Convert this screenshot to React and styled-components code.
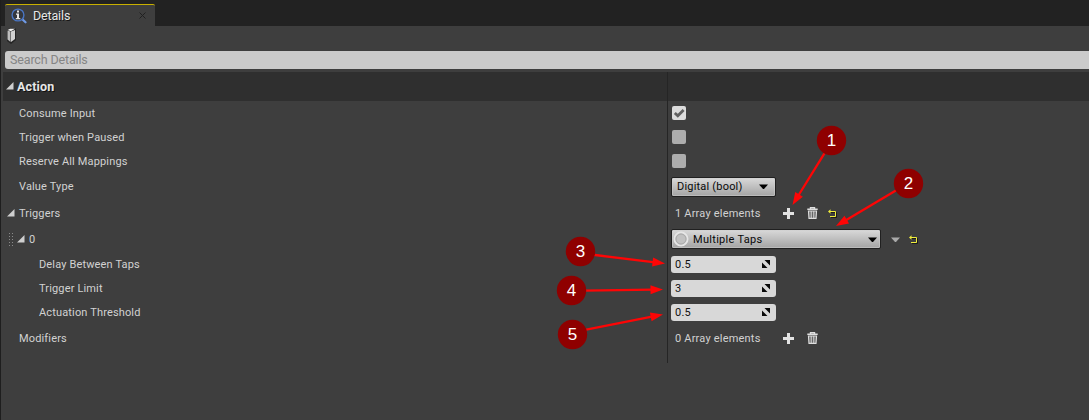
import React from "react";
import styled, { createGlobalStyle } from "styled-components";

const Global = createGlobalStyle`
  * { box-sizing: border-box; }
  body { margin: 0; background: #3e3e3e; overflow: hidden; }
`;

const Window = styled.div`
  position: relative;
  width: 1089px;
  height: 420px;
  overflow: hidden;
  background: #3e3e3e;
  border-left: 1px solid #1e1e1e;
  font-family: Roboto, "Liberation Sans", sans-serif;
  font-size: 11px;
  color: #d2d2d2;
`;

const TabBar = styled.div`
  height: 26px;
  padding: 4px 0 0 4px;
  background: #222;
`;

const Tab = styled.div`
  display: flex;
  align-items: center;
  width: 150px;
  height: 22px;
  padding: 0 9px 0 6px;
  background: #3e3e3e;
  border-top: 1px solid #c9b000;
  border-radius: 2px 2px 0 0;
`;

const TabTitle = styled.span`
  flex: 1;
  margin-left: 6px;
  font-size: 12.5px;
  color: #e6e6e6;
  letter-spacing: -0.15px;
  text-shadow: 1px 1px 0 #161616;
`;

const Toolbar = styled.div`
  height: 25px;
  padding: 2px 0 0 5px;
`;

const Search = styled.div`
  height: 18px;
  margin-left: 4px;
  padding-left: 5px;
  border-radius: 3px 0 0 3px;
  background: #cbcbcb;
  color: #858585;
  font-size: 12.5px;
  line-height: 18px;
  letter-spacing: -0.15px;
`;

const Body = styled.div`
  margin: 3px 0 0 2px;
`;

const Row = styled.div`
  display: flex;
  height: ${(p) => p.$h}px;
  background: ${(p) => (p.$header ? "#2f2f2f" : "transparent")};
`;

const Name = styled.div`
  display: flex;
  align-items: center;
  width: 665px;
  padding-left: ${(p) => p.$indent}px;
  border-right: 1px solid #252525;
  letter-spacing: 0.15px;
`;

const Category = styled.span`
  font-size: 12.5px;
  font-weight: 700;
  color: #e6e6e6;
  text-shadow: 1px 1px 0 #111;
`;

const Value = styled.div`
  display: flex;
  align-items: center;
  padding-left: ${(p) => p.$pad ?? 4}px;
  letter-spacing: 0.2px;
`;

const Check = styled.div`
  display: flex;
  width: 14px;
  height: 14px;
  border-radius: 2px;
  background: ${(p) => (p.$on ? "#dcdcdc" : "#adadad")};
`;

const Combo = styled.div`
  display: flex;
  align-items: center;
  justify-content: space-between;
  width: ${(p) => p.$w}px;
  height: 20px;
  padding: 0 ${(p) => p.$right}px 0 ${(p) => p.$pad}px;
  border: 1px solid #202020;
  border-radius: 2px;
  background: linear-gradient(#d9d9d9, #a4a4a4);
  box-shadow: inset 0 0 0 1px #cfcfcf88;
  color: #080808;
`;

const ComboLabel = styled.span`
  display: flex;
  align-items: center;
  gap: 4px;
  letter-spacing: 0.3px;
`;

const NumberBox = styled.div`
  display: flex;
  align-items: center;
  justify-content: space-between;
  width: 105px;
  height: 17px;
  padding: 0 6px 0 4px;
  border-radius: 3px;
  background: #d8d8d8;
  color: #101010;
`;

const Count = styled.span`
  width: 108px;
`;

const Actions = styled.div`
  display: flex;
  align-items: center;
  gap: ${(p) => p.$gap ?? 12}px;
  margin-left: ${(p) => p.$ml ?? 0}px;
`;

const Icon = styled.svg`
  display: block;
  flex: none;
`;

const Twisty = styled(Icon)`
  margin-right: ${(p) => p.$mr}px;
`;

const Grip = styled(Icon)`
  margin-right: 4px;
`;

const Overlay = styled.svg`
  position: absolute;
  left: -1px;
  top: 0;
  font-family: "Liberation Sans", sans-serif;
`;

const Expander = ({ gap = 4 }) => (
  <Twisty $mr={gap} width="8" height="9" viewBox="0 0 8 9">
    <path d="M7.5 0V7.5H0Z" fill="#cfcfcf" />
  </Twisty>
);

const Caret = ({ fill = "#000" }) => (
  <Icon width="9" height="5" viewBox="0 0 9 5">
    <path d="M0 0.5H9L5 5H4Z" fill={fill} />
  </Icon>
);

const DetailsIcon = () => (
  <Icon width="16" height="16" viewBox="0 0 16 16">
    <path d="M10.5 10.5L14.5 14.3" stroke="#6f9ae6" strokeWidth="2.2" strokeLinecap="round" />
    <circle cx="7" cy="7" r="5.9" fill="#34373d" stroke="#4a76c4" strokeWidth="1.4" />
    <path d="M6 2.5H8V4.5H6ZM5 5.5H8V10H9.3V11.3H4.8V10H6V6.8H5Z" fill="#e5e5e5" />
  </Icon>
);

const BlockIcon = () => (
  <Icon width="12" height="16" viewBox="0 0 12 16">
    <path d="M1 2L3 0.5H10V12L5 16L1 13Z" fill="#242424" />
    <path d="M1.5 2.5L4.5 3.5V14L1.5 11.5Z" fill="#bdbdbd" />
    <path d="M5 3.5L9 2V11L5 14Z" fill="#d2d2d2" />
    <path d="M1.5 2L4 0.8H9L5 3.2Z" fill="#f1f1f1" />
  </Icon>
);

const Plus = () => (
  <Icon width="11" height="11" viewBox="0 0 11 11">
    <path d="M5.5 0V11M0 5.5H11" stroke="#e2e2e2" strokeWidth="3" />
  </Icon>
);

const Trash = () => (
  <Icon width="11" height="12" viewBox="0 0 11 12">
    <path d="M3.5 1.5V0.6H7.5V1.5M0.3 2.2H10.7" fill="none" stroke="#dedede" strokeWidth="1.4" />
    <path d="M1.5 4H9.5L9 11.3H2Z" fill="#666" stroke="#dedede" strokeWidth="1.2" />
    <path d="M4.2 4V11M6.8 4V11" stroke="#dedede" />
  </Icon>
);

const Reset = () => (
  <Icon width="9" height="9" viewBox="0 0 9 9">
    <path d="M2 3.5H8.5V8.5H3" fill="none" stroke="#1b1b1b" />
    <path d="M1 2.5H7.5V7.5H2" fill="none" stroke="#f0ee3c" />
    <path d="M0 2.5L2.5 0.3V4.7Z" fill="#f0ee3c" />
  </Icon>
);

const Spin = () => (
  <Icon width="8" height="8" viewBox="0 0 8 8">
    <path d="M2.5 0H8V5.5ZM0 2.5L5.5 8H0Z" fill="#080808" />
  </Icon>
);

const Ring = () => (
  <Icon width="16" height="16" viewBox="0 0 16 16">
    <circle cx="8" cy="8" r="6.6" fill="#c2c2c2" stroke="#e6e6e6" strokeWidth="1.8" />
    <circle cx="8" cy="8" r="5" fill="none" stroke="#a2a2a2" strokeWidth="0.8" />
  </Icon>
);

const Marker = ({ n, x, y, from, to }) => {
  const dx = to[0] - from[0];
  const dy = to[1] - from[1];
  const len = Math.hypot(dx, dy);
  const angle = (Math.atan2(dy, dx) * 180) / Math.PI;
  return (
    <g>
      <g transform={`translate(${from[0]} ${from[1]}) rotate(${angle})`} fill="#fe0505">
        <rect x="-2" y="-1.15" width={len - 8} height="2.3" />
        <path d={`M${len} 0L${len - 12.5} -4.5V4.5Z`} />
      </g>
      <circle cx={x} cy={y} r="14.7" fill="#8f0000" />
      <text x={x} y={y + 5.5} textAnchor="middle" fontSize="17" fill="#fff">{n}</text>
    </g>
  );
};

const markers = [
  { n: 1, x: 831.5, y: 140.5, from: [824, 154], to: [792.5, 205] },
  { n: 2, x: 908.5, y: 183.5, from: [895, 191], to: [836, 226] },
  { n: 3, x: 580.5, y: 251.5, from: [595, 255], to: [665, 263.5] },
  { n: 4, x: 571.5, y: 290.5, from: [586, 290.5], to: [663, 289.5] },
  { n: 5, x: 572.5, y: 334.5, from: [587, 329.5], to: [663, 314.5] },
];

const toggles = [
  { name: "Consume Input", on: true },
  { name: "Trigger when Paused", on: false },
  { name: "Reserve All Mappings", on: false },
];

const numbers = [
  { name: "Delay Between Taps", value: "0.5" },
  { name: "Trigger Limit", value: "3" },
  { name: "Actuation Threshold", value: "0.5" },
];

export default function App() {
  return (
    <Window>
      <Global />
      <TabBar>
        <Tab>
          <DetailsIcon />
          <TabTitle>Details</TabTitle>
          <Icon width="7" height="7" viewBox="0 0 7 7">
            <path d="M0.5 0.5L6.5 6.5M6.5 0.5L0.5 6.5" stroke="#202020" />
          </Icon>
        </Tab>
      </TabBar>
      <Toolbar><BlockIcon /></Toolbar>
      <Search>Search Details</Search>
      <Body>
        <Row $h={29} $header>
          <Name $indent={3}><Expander gap={3} /><Category>Action</Category></Name>
        </Row>
        {toggles.map((t) => (
          <Row key={t.name} $h={24}>
            <Name $indent={16}>{t.name}</Name>
            <Value>
              <Check $on={t.on}>
                {t.on && (
                  <Icon width="14" height="14" viewBox="0 0 14 14">
                    <path d="M2.8 7L5.8 9.8L11.6 4" fill="none" stroke="#606060" strokeWidth="2.8" />
                  </Icon>
                )}
              </Check>
            </Value>
          </Row>
        ))}
        <Row $h={27}>
          <Name $indent={16}>Value Type</Name>
          <Value $pad={3}>
            <Combo $w={105} $pad={5} $right={7}>Digital (bool)<Caret /></Combo>
          </Value>
        </Row>
        <Row $h={26}>
          <Name $indent={4}><Expander />Triggers</Name>
          <Value $pad={7}>
            <Count>1 Array elements</Count>
            <Actions $gap={13}><Plus /><Trash /><Actions $ml={-3}><Reset /></Actions></Actions>
          </Value>
        </Row>
        <Row $h={26}>
          <Name $indent={6}>
            <Grip width="4" height="13" viewBox="0 0 4 13">
              <path d="M0.5 0V13M3.5 0V13" stroke="#8a8a8a" strokeDasharray="1 2" />
            </Grip>
            <Expander />0
          </Name>
          <Value $pad={3}>
            <Combo $w={210} $pad={1} $right={3}>
              <ComboLabel><Ring />Multiple Taps</ComboLabel>
              <Caret />
            </Combo>
            <Actions $gap={9} $ml={10}><Caret fill="#aaa" /><Reset /></Actions>
          </Value>
        </Row>
        {numbers.map((n) => (
          <Row key={n.name} $h={24}>
            <Name $indent={36}>{n.name}</Name>
            <Value $pad={3}><NumberBox>{n.value}<Spin /></NumberBox></Value>
          </Row>
        ))}
        <Row $h={28}>
          <Name $indent={16}>Modifiers</Name>
          <Value $pad={7}>
            <Count>0 Array elements</Count>
            <Actions $gap={13}><Plus /><Trash /></Actions>
          </Value>
        </Row>
        <Row $h={11}><Name $indent={0} /></Row>
      </Body>
      <Overlay width="1089" height="420" viewBox="0 0 1089 420">
        {markers.map((m) => <Marker key={m.n} {...m} />)}
      </Overlay>
    </Window>
  );
}
